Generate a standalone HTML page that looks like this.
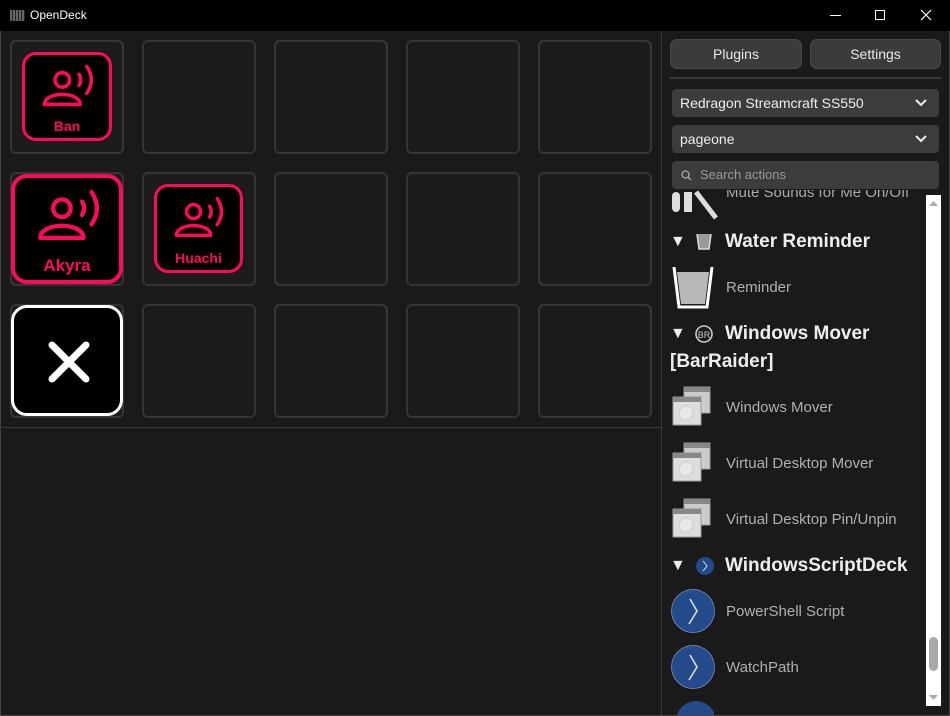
<!DOCTYPE html>
<html><head><meta charset="utf-8"><style>
*{box-sizing:border-box;margin:0;padding:0}
body{width:950px;height:716px;background:#1a1a1a;font-family:"Liberation Sans",sans-serif;position:relative;overflow:hidden;color:#ddd}
.a{position:absolute}
.title{left:0;top:0;width:950px;height:31px;background:#000}
.cell{position:absolute;width:114px;height:114px;border:2px solid #353535;border-radius:6px;background:#1c1c1c}
.key{position:absolute;background:#000;border:3px solid #ff0a5a;border-radius:14px;color:#ff0a5a;font-weight:bold;text-align:center}
.btn{position:absolute;height:30px;background:#3b3b3b;border:1px solid #4a4a4a;border-radius:7px;color:#e8e8e8;font-size:14px;text-align:center;line-height:28px}
.dd{position:absolute;left:672px;width:267px;height:28px;background:#3c3c3c;border-radius:4px;color:#eee;font-size:14px;line-height:28px;padding-left:8px}
.chev{position:absolute;right:12px;top:10px}
.h{position:absolute;left:670px;font-size:19px;font-weight:bold;color:#eee}
.it{position:absolute;left:726px;font-size:15px;color:#b0b0b0}
.tri{position:absolute;left:670px;font-size:16px;color:#eee}
</style></head><body>
<div class="a title"></div>
<div class="a" style="left:10px;top:10px;width:15px;height:11px;background:repeating-linear-gradient(90deg,#666 0 2px,#222 2px 3px)"></div>
<div class="a" style="left:30px;top:8px;font-size:12px;color:#fff">OpenDeck</div>
<div class="a" style="left:830px;top:15px;width:11px;height:1px;background:#fff"></div>
<div class="a" style="left:875px;top:10px;width:10px;height:10px;border:1px solid #fff"></div>
<svg class="a" style="left:920px;top:9px" width="12" height="12"><path d="M1 1L11 11M11 1L1 11" stroke="#fff" stroke-width="1.2"/></svg>
<div class="a" style="left:0;top:31px;width:1px;height:685px;background:#444"></div>
<div class="a" style="left:949px;top:31px;width:1px;height:685px;background:#444"></div>
<div class="a" style="left:0;top:715px;width:950px;height:1px;background:#444"></div>

<div class="cell" style="left:10px;top:40px"></div><div class="cell" style="left:142px;top:40px"></div><div class="cell" style="left:274px;top:40px"></div><div class="cell" style="left:406px;top:40px"></div><div class="cell" style="left:538px;top:40px"></div>
<div class="cell" style="left:10px;top:172px"></div><div class="cell" style="left:142px;top:172px"></div><div class="cell" style="left:274px;top:172px"></div><div class="cell" style="left:406px;top:172px"></div><div class="cell" style="left:538px;top:172px"></div>
<div class="cell" style="left:10px;top:304px"></div><div class="cell" style="left:142px;top:304px"></div><div class="cell" style="left:274px;top:304px"></div><div class="cell" style="left:406px;top:304px"></div><div class="cell" style="left:538px;top:304px"></div>
<div class="a" style="left:0;top:427px;width:661px;height:1px;background:#3a3a3a"></div>
<div class="a" style="left:661px;top:31px;width:1px;height:685px;background:#3a3a3a"></div>

<svg width="0" height="0" style="position:absolute"><defs><g id="ic" fill="none" stroke="#ff0a5a" stroke-width="3.2" stroke-linecap="round"><circle cx="20" cy="16" r="6.5"/><path d="M4 38 C4 26 36 26 36 38 Z" stroke-linejoin="round"/><path d="M35 11 Q38 16 35 21"/><path d="M42 4 Q50 16 42 28"/></g></defs></svg>
<div class="key" style="left:22px;top:52px;width:90px;height:89px"><svg style="position:absolute;left:15px;top:7px" width="58" height="47" viewBox="0 0 52 42"><use href="#ic"/></svg><div style="position:absolute;top:63px;width:100%;font-size:14px">Ban</div></div>
<div class="key" style="left:11px;top:174px;width:112px;height:110px;border-width:4px;border-radius:16px"><svg style="position:absolute;left:20px;top:8px" width="70" height="58" viewBox="0 0 52 42"><use href="#ic"/></svg><div style="position:absolute;top:78px;width:100%;font-size:17px">Akyra</div></div>
<div class="key" style="left:154px;top:184px;width:89px;height:89px"><svg style="position:absolute;left:15px;top:7px" width="56" height="46" viewBox="0 0 52 42"><use href="#ic"/></svg><div style="position:absolute;top:63px;width:100%;font-size:14px">Huachi</div></div>
<div class="key" style="left:11px;top:305px;width:112px;height:111px;border-color:#fff;border-width:3px;border-radius:16px"><svg style="position:absolute;left:33px;top:32px" width="44" height="44"><path d="M5 5L39 39M39 5L5 39" stroke="#fff" stroke-width="7" stroke-linecap="round"/></svg></div>

<div class="btn" style="left:670px;top:39px;width:132px">Plugins</div>
<div class="btn" style="left:810px;top:39px;width:131px">Settings</div>
<div class="a" style="left:670px;top:77px;width:271px;height:2px;background:#3a3a3a"></div>
<div class="dd" style="top:89px">Redragon Streamcraft SS550<svg class="chev" width="12" height="8"><path d="M1 1L6 6L11 1" stroke="#eee" stroke-width="2" fill="none"/></svg></div>
<div class="dd" style="top:125px">pageone<svg class="chev" width="12" height="8"><path d="M1 1L6 6L11 1" stroke="#eee" stroke-width="2" fill="none"/></svg></div>
<div class="dd" style="top:161px;color:#999;font-size:13px;padding-left:28px"><svg style="position:absolute;left:9px;top:9px" width="11" height="11"><circle cx="4.5" cy="4.5" r="3.5" stroke="#aaa" fill="none" stroke-width="1.3"/><path d="M7 7L10 10" stroke="#aaa" stroke-width="1.3"/></svg>Search actions</div>

<div class="a" style="left:662px;top:190px;width:264px;height:526px;overflow:hidden">
 <div class="a" style="left:64px;top:-6px;font-size:15px;color:#aaa;white-space:nowrap">Mute Sounds for Me On/Off</div>
 <svg class="a" style="left:10px;top:0" width="48" height="36"><rect x="0" y="2" width="8" height="20" rx="4" fill="#ddd"/><rect x="12" y="2" width="8" height="20" fill="#ddd"/><path d="M24 2L44 28" stroke="#ddd" stroke-width="5"/></svg>
</div>
<div class="tri" style="top:233px">▼</div>
<svg class="a" style="left:696px;top:233px" width="16" height="18"><path d="M1 1L3 16H13L15 1" stroke="#ddd" stroke-width="1.5" fill="#999"/></svg>
<div class="h" style="top:231px;left:725px">Water Reminder</div>
<svg class="a" style="left:672px;top:265px" width="42" height="45"><path d="M2 2L7 42H35L40 2" stroke="#fff" stroke-width="3" fill="none"/><path d="M5 7L9 39H33L37 7Z" fill="#b8b8b8"/></svg>
<div class="it" style="top:279px">Reminder</div>
<div class="tri" style="top:325px">▼</div>
<svg class="a" style="left:694px;top:324px" width="20" height="20"><circle cx="10" cy="10" r="8" stroke="#ccc" stroke-width="1.6" fill="none"/><text x="10" y="14" font-size="9" fill="#ccc" text-anchor="middle" font-family="Liberation Sans">BR</text></svg>
<div class="h" style="top:323px;left:725px">Windows Mover</div>
<div class="h" style="top:351px">[BarRaider]</div>
<svg width="0" height="0" style="position:absolute"><defs><g id="wm"><rect x="14" y="2" width="26" height="26" fill="#ccc" stroke="#999"/><rect x="14" y="2" width="26" height="5" fill="#888"/><rect x="3" y="12" width="28" height="28" fill="#ddd" stroke="#999"/><rect x="3" y="12" width="28" height="5" fill="#888"/><circle cx="16" cy="28" r="7" fill="#e8e8e8" stroke="#ccc"/></g></defs></svg>
<svg class="a" style="left:670px;top:385px" width="44" height="44"><use href="#wm"/></svg>
<div class="it" style="top:399px">Windows Mover</div>
<svg class="a" style="left:670px;top:441px" width="44" height="44"><use href="#wm"/></svg>
<div class="it" style="top:455px">Virtual Desktop Mover</div>
<svg class="a" style="left:670px;top:497px" width="44" height="44"><use href="#wm"/></svg>
<div class="it" style="top:511px">Virtual Desktop Pin/Unpin</div>
<div class="tri" style="top:557px">▼</div>
<svg class="a" style="left:695px;top:556px" width="20" height="20"><circle cx="10" cy="10" r="9" fill="#234a8a"/><path d="M8 5L12 10L8 15" stroke="#ddd" stroke-width="1" fill="none"/></svg>
<div class="h" style="top:555px;left:725px">WindowsScriptDeck</div>
<svg class="a" style="left:671px;top:589px" width="46" height="46"><circle cx="22" cy="22" r="21.5" fill="#234a8a" stroke="#8899bb" stroke-width="0.7"/><path d="M19 10L26 22L18 35" stroke="#ddd" stroke-width="1.6" fill="none"/></svg>
<div class="it" style="top:603px">PowerShell Script</div>
<svg class="a" style="left:671px;top:645px" width="46" height="46"><circle cx="22" cy="22" r="21.5" fill="#234a8a" stroke="#8899bb" stroke-width="0.7"/><path d="M19 10L26 22L18 35" stroke="#ddd" stroke-width="1.6" fill="none"/></svg>
<div class="it" style="top:659px">WatchPath</div>
<div class="a" style="left:676px;top:701px;width:38px;height:14px;overflow:hidden"><div style="width:40px;height:40px;border-radius:50%;background:#234a8a"></div></div>

<div class="a" style="left:926px;top:195px;width:15px;height:511px;background:#fff"></div>
<svg class="a" style="left:928px;top:200px" width="11" height="8"><path d="M1 6L5.5 1L10 6Z" fill="#aaa"/></svg>
<svg class="a" style="left:928px;top:694px" width="11" height="8"><path d="M1 1L5.5 6L10 1Z" fill="#aaa"/></svg>
<div class="a" style="left:929px;top:637px;width:9px;height:34px;border-radius:5px;background:#a8a8a8"></div>
</body></html>
